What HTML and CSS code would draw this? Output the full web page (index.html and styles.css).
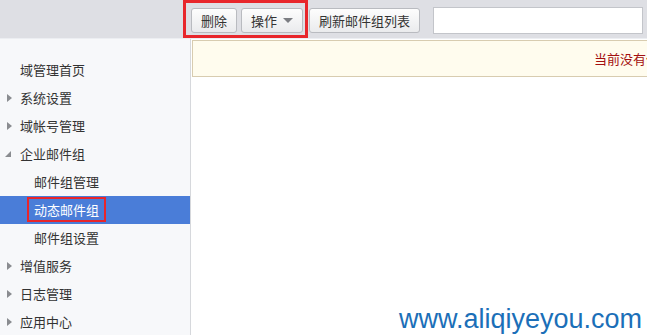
FILE: index.html
```html
<!DOCTYPE html>
<html lang="zh-CN">
<head>
    <meta charset="UTF-8">
    <meta name="viewport" content="width=device-width, initial-scale=1.0">
    <title>动态邮件组</title>
    <link rel="stylesheet" href="styles.css">
</head>
<body>
    <!-- 顶部工具栏 -->
    <div class="toolbar">
        <div class="tool-group">
            <button class="button btn-del">删除</button>
            <button class="button btn-op">操作 <span class="caret"></span></button>
        </div>
        <button class="button btn-refresh">刷新邮件组列表</button>
        <input type="text" class="search">
        <div class="mark mark-tools"></div>
    </div>

    <div class="layout">
        <!-- 左侧菜单 -->
        <ul class="menu">
            <li class="item">域管理首页</li>
            <li class="item closed">系统设置</li>
            <li class="item closed">域帐号管理</li>
            <li class="item open">企业邮件组</li>
            <li class="item sub">邮件组管理</li>
            <li class="item sub active"><span class="mark-text">动态邮件组</span></li>
            <li class="item sub">邮件组设置</li>
            <li class="item closed">增值服务</li>
            <li class="item closed">日志管理</li>
            <li class="item closed">应用中心</li>
        </ul>

        <div class="main">
            <div class="notice">当前没有任何动态邮件组</div>
        </div>
    </div>

    <div class="watermark">www.aliqiyeyou.com</div>
</body>
</html>
```

FILE: styles.css
```css
body {
    margin: 0;
    font-family: "Noto Sans CJK SC", "Liberation Sans", sans-serif;
    font-size: 13px;
    color: #333;
    background-color: #fff;
    width: 647px;
    height: 335px;
    overflow: hidden;
    position: relative;
}

.toolbar {
    position: relative;
    height: 39px;
    background-color: #dedfe4;
    border-bottom: 1px solid #eceef2;
    box-sizing: border-box;
    display: flex;
    align-items: flex-start;
    padding: 7px 0 0 191px;
}

.tool-group {
    display: flex;
    gap: 4px;
}

.button {
    height: 25px;
    padding: 0 9px;
    border: 1px solid #b9bbc0;
    border-radius: 3px;
    background: linear-gradient(#fdfdfd, #eaebed);
    font-family: inherit;
    font-size: 13px;
    color: #333;
    line-height: 23px;
    cursor: pointer;
    margin-top: 1px;
}

.btn-del {
    width: 46px;
}

.btn-op {
    width: 62px;
    display: flex;
    align-items: center;
    justify-content: center;
    gap: 6px;
}

.caret {
    width: 0;
    height: 0;
    border-left: 5px solid transparent;
    border-right: 5px solid transparent;
    border-top: 5px solid #7b7d82;
}

.btn-refresh {
    width: 111px;
    margin-left: 6px;
}

.search {
    width: 210px;
    height: 27px;
    margin-left: 13px;
    border: 1px solid #c3c5ca;
    box-sizing: border-box;
    background-color: #fff;
}

.mark {
    position: absolute;
    border: 3px solid #e8262b;
}

.mark-tools {
    left: 183px;
    top: 0;
    width: 119px;
    height: 32px;
}

.layout {
    display: flex;
    height: 296px;
}

.menu {
    list-style: none;
    margin: 0;
    padding: 17px 0 0;
    width: 190px;
    background-color: #f7f8fa;
    border-right: 1px solid #d6d8dc;
    flex-shrink: 0;
}

.item {
    position: relative;
    height: 28px;
    line-height: 28px;
    padding-left: 20px;
}

.item.closed::before {
    content: "";
    position: absolute;
    left: 7px;
    top: 10px;
    border-top: 4px solid transparent;
    border-bottom: 4px solid transparent;
    border-left: 5px solid #8a8c90;
}

.item.open::before {
    content: "";
    position: absolute;
    left: 5px;
    top: 11px;
    border-left: 6px solid transparent;
    border-bottom: 6px solid #8a8c90;
}

.item.sub {
    padding-left: 34px;
}

.item.active {
    background-color: #4a7dd8;
    color: #fff;
}

.mark-text {
    display: inline-block;
    line-height: 21px;
    margin-left: -7px;
    padding: 0 5px;
    border: 2px solid #e8262b;
}

.main {
    flex: 1;
    overflow: hidden;
    padding: 1px 0 0 1px;
}

.notice {
    width: 700px;
    height: 37px;
    box-sizing: border-box;
    border: 1px solid #d8ccb0;
    background-color: #fffcee;
    color: #a30f0f;
    line-height: 35px;
    padding-left: 401px;
    white-space: nowrap;
}

.watermark {
    position: absolute;
    right: 5px;
    bottom: 0;
    font-family: "Liberation Sans", Arial, sans-serif;
    font-size: 27px;
    color: #1b6fb8;
    line-height: 31px;
}
```
